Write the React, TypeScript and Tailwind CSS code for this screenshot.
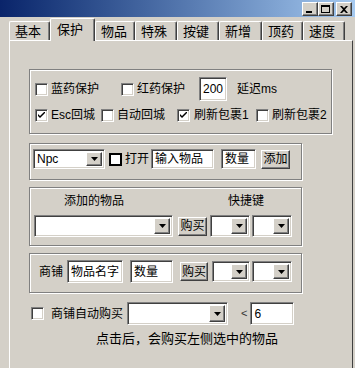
import React from 'react'

const sunken =
  'bg-white border border-t-[#808080] border-l-[#808080] border-r-white border-b-white shadow-[inset_1px_1px_0_#404040,inset_-1px_-1px_0_#d4d0c8]'
const raised =
  'bg-[#d4d0c8] border border-t-white border-l-white border-r-[#404040] border-b-[#404040] shadow-[inset_-1px_-1px_0_#808080]'
const group = 'border border-[#808080] shadow-[inset_1px_1px_0_#fff,1px_1px_0_#fff]'

function Check({ checked = false }: { checked?: boolean }) {
  return (
    <span className={`${sunken} w-[13px] h-[13px] shrink-0 flex items-center justify-center`}>
      {checked && (
        <svg width="7" height="7" viewBox="0 0 7 7">
          <path d="M0 2 L0 4 L2 6 L7 1 L7 -1 L2 4 Z" fill="#000" />
        </svg>
      )}
    </span>
  )
}

function CheckLabel({ text, checked, w }: { text: string; checked?: boolean; w?: string }) {
  return (
    <label className={`flex items-center gap-[3px] shrink-0 ${w ?? ''}`}>
      <Check checked={checked} />
      <span className="leading-[14px] whitespace-nowrap">{text}</span>
    </label>
  )
}

function Arrow() {
  return (
    <span className={`${raised} w-[16px] h-full shrink-0 flex items-center justify-center`}>
      <svg width="7" height="4" viewBox="0 0 7 4">
        <path d="M0 0 H7 L3.5 4 Z" fill="#000" />
      </svg>
    </span>
  )
}

function Select({ text = '', w, h }: { text?: string; w: string; h: string }) {
  return (
    <div className={`${sunken} ${w} ${h} shrink-0 flex p-[2px]`}>
      <span className="flex-1 pl-[1px] leading-[14px] self-center whitespace-nowrap overflow-hidden">{text}</span>
      <Arrow />
    </div>
  )
}

function Field({ text, w, h, cls = '' }: { text: string; w: string; h: string; cls?: string }) {
  return (
    <div className={`${sunken} ${w} ${h} shrink-0 flex items-center pl-[3px] whitespace-nowrap overflow-hidden ${cls}`}>
      {text}
    </div>
  )
}

function Btn({ text, w, h, cls = '' }: { text: string; w: string; h: string; cls?: string }) {
  return (
    <button className={`${raised} ${w} ${h} shrink-0 flex items-center justify-center leading-none ${cls}`}>
      {text}
    </button>
  )
}

const tabs = [
  { label: '基本', w: 'w-[41px]' },
  { label: '保护', w: 'w-[45px]', active: true },
  { label: '物品', w: 'w-[40px]' },
  { label: '特殊', w: 'w-[42px]' },
  { label: '按键', w: 'w-[42px]' },
  { label: '新增', w: 'w-[43px]' },
  { label: '顶药', w: 'w-[41px]' },
  { label: '速度', w: 'w-[42px]' },
]

export default function App() {
  return (
    <div className="w-[355px] h-[368px] overflow-hidden bg-[#d4d0c8] text-black text-[12px] font-['Liberation_Sans','Noto_Sans_CJK_SC',sans-serif]">
      {/* title bar */}
      <div className="h-[17px] bg-gradient-to-r from-[#0a246a] to-[#a6caf0] flex justify-end items-start pt-[2px] pr-[3px]">
        <div className={`${raised} w-[16px] h-[14px] flex items-end justify-center pb-[2px]`}>
          <span className="w-[6px] h-[2px] bg-black -ml-[2px]" />
        </div>
        <div className={`${raised} w-[16px] h-[14px] flex items-center justify-center`}>
          <span className="w-[9px] h-[8px] border border-black border-t-2 -ml-[1px]" />
        </div>
        <div className={`${raised} w-[16px] h-[14px] ml-[2px] flex items-center justify-center`}>
          <svg width="8" height="7" viewBox="0 0 8 7" className="-ml-[1px]">
            <path d="M0 0 H2 L4 2 L6 0 H8 L5 3.5 L8 7 H6 L4 5 L2 7 H0 L3 3.5 Z" fill="#000" />
          </svg>
        </div>
      </div>

      {/* tabs */}
      <div className="h-[23px] flex items-end pl-[9px]">
        {tabs.map((t) =>
          t.active ? (
            <div
              key={t.label}
              className={`${t.w} h-[23px] -mb-px relative z-10 bg-[#d4d0c8] border-t border-l border-t-white border-l-white border-r border-r-[#404040] shadow-[inset_-1px_0_0_#808080] pl-[6px] pt-[3px] text-[13px] leading-[15px] rounded-t-[2px]`}
            >
              {t.label}
            </div>
          ) : (
            <div
              key={t.label}
              className={`${t.w} h-[19px] border-t border-l border-t-white border-l-white border-r border-r-[#404040] shadow-[inset_-1px_0_0_#808080] pl-[5px] pt-[2px] text-[13px] leading-[15px] rounded-t-[2px]`}
            >
              {t.label}
            </div>
          ),
        )}
      </div>

      {/* panel */}
      <div className="ml-[9px] w-[344px] h-[328px] border-t border-l border-t-white border-l-white border-r border-r-[#404040] pl-[19px] pt-[28px]">
        {/* group 1 */}
        <div className={`${group} w-[303px] h-[65px]`}>
          <div className="mt-[7px] h-[24px] flex items-center pl-[5px]">
            <CheckLabel text="蓝药保护" w="w-[86px]" />
            <CheckLabel text="红药保护" w="w-[78px]" />
            <Field text="200" w="w-[28px]" h="h-[24px]" />
            <span className="ml-[10px]">延迟ms</span>
          </div>
          <div className="mt-[6px] h-[16px] flex items-center pl-[5px]">
            <CheckLabel text="Esc回城" checked w="w-[66px]" />
            <CheckLabel text="自动回城" w="w-[76px]" />
            <label className="flex items-center gap-[4px] shrink-0 w-[79px]">
              <Check checked />
              <span className="leading-[14px] whitespace-nowrap">刷新包裹1</span>
            </label>
            <CheckLabel text="刷新包裹2" />
          </div>
        </div>

        {/* group 2 */}
        <div className={`${group} mt-[9px] w-[273px] h-[37px]`}>
          <div className="mt-[5px] h-[20px] flex items-center pl-[3px]">
            <Select text="Npc" w="w-[72px]" h="h-[20px]" />
            <span className="ml-[4px] w-[13px] h-[13px] border-2 border-black bg-white shrink-0" />
            <span className="ml-[3px]">打开</span>
            <Field text="输入物品" w="w-[63px]" h="h-[20px]" cls="ml-[2px]" />
            <Field text="数量" w="w-[35px]" h="h-[20px]" cls="ml-[7px]" />
            <Btn text="添加" w="w-[29px]" h="h-[19px]" cls="ml-[5px]" />
          </div>
        </div>

        {/* group 3 */}
        <div className={`${group} mt-[7px] w-[273px] h-[59px]`}>
          <div className="mt-[6px] h-[14px] flex items-center leading-[14px]">
            <span className="ml-[34px] w-[164px]">添加的物品</span>
            <span>快捷键</span>
          </div>
          <div className="mt-[7px] h-[22px] flex items-center pl-[4px]">
            <Select w="w-[139px]" h="h-[22px]" />
            <Btn text="购买" w="w-[29px]" h="h-[19px]" cls="ml-[5px]" />
            <div className="ml-[3px]">
              <Select w="w-[40px]" h="h-[22px]" />
            </div>
            <div className="ml-[2px]">
              <Select w="w-[40px]" h="h-[22px]" />
            </div>
          </div>
        </div>

        {/* group 4 */}
        <div className={`${group} mt-[7px] w-[273px] h-[40px]`}>
          <div className="mt-[6px] h-[23px] flex items-center pl-[9px]">
            <span className="w-[28px] shrink-0">商铺</span>
            <Field text="物品名字" w="w-[56px]" h="h-[23px]" />
            <Field text="数量" w="w-[43px]" h="h-[23px]" cls="ml-[7px]" />
            <Btn text="购买" w="w-[28px]" h="h-[19px]" cls="ml-[7px]" />
            <div className="ml-[4px]">
              <Select w="w-[38px]" h="h-[21px]" />
            </div>
            <div className="ml-[2px]">
              <Select w="w-[40px]" h="h-[21px]" />
            </div>
          </div>
        </div>

        {/* auto buy row */}
        <div className="mt-[9px] h-[23px] flex items-center">
          <label className="ml-[2px] w-[96px] shrink-0 flex items-center gap-[7px]">
            <Check />
            <span className="leading-[14px] whitespace-nowrap">商铺自动购买</span>
          </label>
          <Select w="w-[101px]" h="h-[23px]" />
          <span className="ml-[13px] text-[11px] text-[#333]">&lt;</span>
          <Field text="6" w="w-[44px]" h="h-[23px]" cls="ml-[3px]" />
        </div>

        <div className="mt-[6px] ml-[67px] text-[13px] leading-[16px] whitespace-nowrap">点击后，会购买左侧选中的物品</div>
      </div>
    </div>
  )
}
